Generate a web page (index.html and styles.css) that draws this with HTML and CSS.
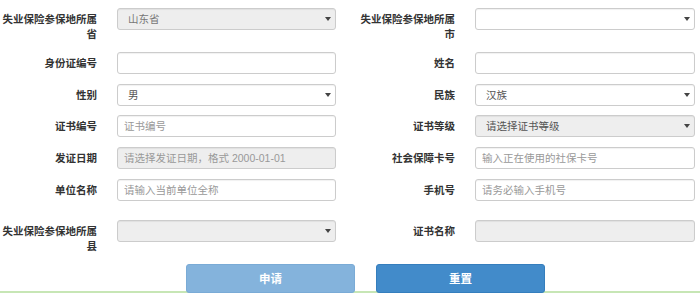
FILE: index.html
```html
<!DOCTYPE html>
<html lang="zh-CN">
<head>
<meta charset="utf-8">
<title>失业保险技能提升补贴申请</title>
<link rel="stylesheet" href="styles.css">
</head>
<body>
<form class="form">
  <div class="row">
    <div class="field">
      <label class="label">失业保险参保地所属省</label>
      <div class="select-wrap"><select class="control select disabled" disabled><option>山东省</option></select></div>
    </div>
    <div class="field right">
      <label class="label">失业保险参保地所属市</label>
      <div class="select-wrap"><select class="control select"><option></option></select></div>
    </div>
  </div>
  <div class="row">
    <div class="field">
      <label class="label">身份证编号</label>
      <input class="control input" type="text">
    </div>
    <div class="field right">
      <label class="label">姓名</label>
      <input class="control input" type="text">
    </div>
  </div>
  <div class="row">
    <div class="field">
      <label class="label">性别</label>
      <div class="select-wrap"><select class="control select"><option>男</option></select></div>
    </div>
    <div class="field right">
      <label class="label">民族</label>
      <div class="select-wrap"><select class="control select"><option>汉族</option></select></div>
    </div>
  </div>
  <div class="row">
    <div class="field">
      <label class="label">证书编号</label>
      <input class="control input" type="text" placeholder="证书编号">
    </div>
    <div class="field right">
      <label class="label">证书等级</label>
      <div class="select-wrap"><select class="control select grey"><option>请选择证书等级</option></select></div>
    </div>
  </div>
  <div class="row">
    <div class="field">
      <label class="label">发证日期</label>
      <input class="control input disabled" type="text" placeholder="请选择发证日期，格式 2000-01-01" readonly>
    </div>
    <div class="field right">
      <label class="label">社会保障卡号</label>
      <input class="control input" type="text" placeholder="输入正在使用的社保卡号">
    </div>
  </div>
  <div class="row row-spaced">
    <div class="field">
      <label class="label">单位名称</label>
      <input class="control input" type="text" placeholder="请输入当前单位全称">
    </div>
    <div class="field right">
      <label class="label">手机号</label>
      <input class="control input" type="text" placeholder="请务必输入手机号">
    </div>
  </div>
  <div class="row">
    <div class="field">
      <label class="label">失业保险参保地所属县</label>
      <div class="select-wrap"><select class="control select disabled" disabled><option></option></select></div>
    </div>
    <div class="field right">
      <label class="label">证书名称</label>
      <input class="control input disabled" type="text" readonly>
    </div>
  </div>
  <div class="actions">
    <button type="button" class="btn btn-submit">申请</button>
    <button type="button" class="btn btn-reset">重置</button>
  </div>
</form>
</body>
</html>
```
FILE: styles.css
```css
* { box-sizing: border-box; }
html, body { margin: 0; padding: 0; background: #fff; }
body {
  font-family: "Liberation Sans", "Noto Sans CJK SC", sans-serif;
  font-size: 10.5px;
  color: #333;
  overflow: hidden;
}
.form {
  padding-top: 8px;
  height: 293px;
  border-bottom: 2px solid #c7e6b5;
}
.row {
  display: flex;
  margin-bottom: 9.75px;
}
.row-spaced { margin-bottom: 19px; }
.field {
  display: flex;
  align-items: flex-start;
  width: 336px;
}
.field.right {
  margin-left: 22px;
  width: 337px;
}
.label {
  flex: 0 0 97px;
  width: 97px;
  text-align: right;
  font-weight: bold;
  line-height: 15px;
  padding-top: 4px;
  margin-right: 20px;
  color: #333;
  word-break: break-all;
}
.select-wrap {
  position: relative;
  flex: 1 1 auto;
}
.select-wrap::after {
  content: "";
  position: absolute;
  right: 5px;
  top: 9px;
  width: 0;
  height: 0;
  border-left: 3px solid transparent;
  border-right: 3px solid transparent;
  border-top: 4px solid #444;
  pointer-events: none;
}
.control {
  display: block;
  width: 100%;
  height: 22px;
  margin: 0;
  border: 1px solid #ccc;
  border-radius: 3px;
  background: #fff;
  font-family: "Liberation Sans", "Noto Sans CJK SC", sans-serif;
  font-size: 10.5px;
  color: #555;
  box-shadow: inset 0 1px 1px rgba(0,0,0,0.06);
  outline: none;
}
.input {
  flex: 1 1 auto;
  padding: 0 6px;
}
.select {
  -webkit-appearance: none;
  appearance: none;
  padding: 0 10px;
}
.control.disabled { background: #eee; color: #777; opacity: 1; }
.control.grey { background: #eee; color: #555; }
.input::placeholder { color: #999; }
.actions {
  display: flex;
  padding-left: 186px;
  gap: 21px;
  margin-top: 0.5px;
  position: relative;
}
.btn {
  width: 169px;
  height: 29px;
  border-radius: 3px;
  border: 1px solid #3a83c4;
  font-family: "Liberation Sans", "Noto Sans CJK SC", sans-serif;
  font-size: 11.5px;
  font-weight: bold;
  color: #fff;
  padding: 0;
}
.btn-submit {
  background: #84b3dc;
  border-color: #7aabd6;
}
.btn-reset {
  background: #428bca;
  border-color: #357ebd;
}
```
